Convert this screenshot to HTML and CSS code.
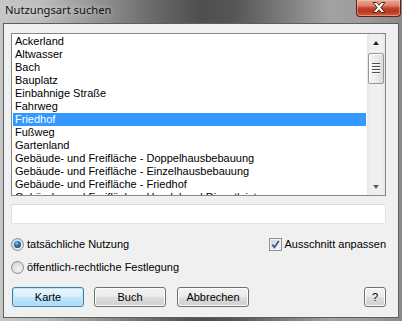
FILE: index.html
```html
<!DOCTYPE html>
<html>
<head>
<meta charset="utf-8">
<link rel="stylesheet" href="styles.css">
</head>
<body>
<div class="window">
  <div class="titlebar">
    <span class="title">Nutzungsart suchen</span>
    <div class="close">
      <svg width="14" height="11" viewBox="0 0 14 11"><polygon points="1,0.5 4.5,0.5 7,3.3 9.5,0.5 13,0.5 8.8,5.5 13,10.5 9.5,10.5 7,7.7 4.5,10.5 1,10.5 5.2,5.5" fill="#fff" stroke="#4a2a24" stroke-width="1" stroke-linejoin="round"/></svg>
    </div>
  </div>
  <div class="client">
    <div class="listbox">
      <div class="items">
        <div class="item">Ackerland</div>
        <div class="item">Altwasser</div>
        <div class="item">Bach</div>
        <div class="item">Bauplatz</div>
        <div class="item">Einbahnige Straße</div>
        <div class="item">Fahrweg</div>
        <div class="item selected">Friedhof</div>
        <div class="item">Fußweg</div>
        <div class="item">Gartenland</div>
        <div class="item">Gebäude- und Freifläche - Doppelhausbebauung</div>
        <div class="item">Gebäude- und Freifläche - Einzelhausbebauung</div>
        <div class="item">Gebäude- und Freifläche - Friedhof</div>
        <div class="item">Gebäude- und Freifläche - Handel und Dienstleistung</div>
      </div>
      <div class="scrollbar">
        <div class="arrow up"></div>
        <div class="thumb"><span></span><span></span><span></span><span></span></div>
        <div class="track"></div>
        <div class="arrow down"></div>
      </div>
    </div>
    <div class="textbox"></div>
    <div class="opt-row first">
      <label class="opt"><span class="radio checked"></span>tatsächliche Nutzung</label>
      <label class="opt"><span class="check"><svg width="11" height="11" viewBox="0 0 11 11"><path d="M2.2 5.6 L4.4 8.3 L8.8 2" fill="none" stroke="#3a54a4" stroke-width="1.8"/></svg></span>Ausschnitt anpassen</label>
    </div>
    <div class="opt-row second">
      <label class="opt"><span class="radio"></span>öffentlich-rechtliche Festlegung</label>
    </div>
    <div class="buttons">
      <div class="btn default">Karte</div>
      <div class="btn">Buch</div>
      <div class="btn wide">Abbrechen</div>
      <div class="btn help">?</div>
    </div>
  </div>
</div>
</body>
</html>
```

FILE: styles.css
```css
html, body {
  margin: 0;
  padding: 0;
}
body {
  width: 402px;
  height: 321px;
  overflow: hidden;
  font-family: "Liberation Sans", Arial, sans-serif;
  font-size: 11px;
  color: #000;
}
.window {
  width: 402px;
  height: 321px;
  box-sizing: border-box;
  padding: 0 3px 3px 3px;
  display: flex;
  flex-direction: column;
  background: linear-gradient(to right, #c6c6c6 0%, #bcbcbc 10%, #9a9a9a 22%, #6a6a6a 38%, #4e4e4e 50%, #555 58%, #7a7a7a 70%, #a2a2a2 82%, #9c9c9c 90%, #8a8a8a 100%);
}
.titlebar {
  height: 23px;
  display: flex;
  align-items: flex-start;
  flex-shrink: 0;
}
.title {
  font-family: "Noto Sans", "Open Sans", sans-serif;
  font-size: 11.2px;
  line-height: 16px;
  margin-top: 2px;
  margin-left: 2px;
  color: #111;
  text-shadow: 0 0 6px rgba(255,255,255,0.7);
}
.close {
  margin-left: auto;
  margin-right: -2px;
  width: 45px;
  height: 17px;
  box-sizing: border-box;
  border: 1px solid #5c2218;
  border-top: none;
  border-radius: 0 0 4px 4px;
  background: linear-gradient(to bottom, #e9a792 0%, #d9826c 35%, #c3442c 50%, #b8341d 70%, #d0603d 100%);
  box-shadow: inset 0 0 0 1px rgba(255,210,190,0.45);
  display: flex;
  align-items: center;
  justify-content: center;
}
.close svg {
  display: block;
  margin-top: -1px;
}
.client {
  flex: 1;
  border: 1px solid #5e5e5e;
  background: #f0f0f0;
  padding: 9px 0 0 7px;
}
.listbox {
  width: 375px;
  height: 163px;
  box-sizing: border-box;
  border: 1px solid #828790;
  background: #fff;
  display: flex;
}
.items {
  flex: 1;
  padding: 1px 1px 0 1px;
  overflow: hidden;
}
.item {
  height: 13px;
  line-height: 13px;
  padding-left: 2px;
  white-space: nowrap;
}
.item.selected {
  background: #3399ff;
  color: #fff;
}
.scrollbar {
  width: 18px;
  display: flex;
  flex-direction: column;
  background: linear-gradient(to right, #e6e6e6, #f0f0f0 20%, #f0f0f0 80%, #e8e8e8);
}
.arrow {
  height: 17px;
  display: flex;
  align-items: center;
  justify-content: center;
}
.arrow::before {
  content: "";
  width: 0;
  height: 0;
  border-left: 3.5px solid transparent;
  border-right: 3.5px solid transparent;
}
.arrow.up::before {
  border-bottom: 4px solid #222;
  margin-top: 1px;
}
.arrow.down::before {
  border-top: 4px solid #606060;
  margin-top: 1px;
}
.thumb {
  margin: 2px 1px 0 1px;
  height: 31px;
  box-sizing: border-box;
  border: 1px solid #969696;
  border-radius: 2px;
  background: linear-gradient(to right, #f6f6f6 0%, #ececec 50%, #dadada 100%);
  box-shadow: inset 1px 1px 0 #fff;
  display: flex;
  flex-direction: column;
  align-items: center;
  justify-content: center;
  gap: 1px;
}
.thumb span {
  width: 8px;
  height: 1px;
  background: #4d4d4d;
  border-bottom: 1px solid #f8f8f8;
}
.track {
  flex: 1;
}
.textbox {
  margin-top: 8px;
  width: 375px;
  height: 20px;
  box-sizing: border-box;
  border: 1px solid #dfe3e8;
  border-top-color: #d4d7db;
  border-radius: 2px;
  background: #fff;
}
.opt-row {
  display: flex;
  justify-content: space-between;
  width: 375px;
  height: 13px;
  line-height: 13px;
}
.opt-row.first {
  margin-top: 14px;
}
.opt-row.second {
  margin-top: 10px;
}
.opt {
  display: flex;
  align-items: center;
  white-space: nowrap;
}
.radio {
  width: 13px;
  height: 13px;
  box-sizing: border-box;
  border-radius: 50%;
  border: 1px solid #8a8a8a;
  background: radial-gradient(circle at 60% 65%, #f4f4f4 0%, #dcdcdc 60%, #cfcfcf 100%);
  margin-right: 3px;
  display: flex;
  align-items: center;
  justify-content: center;
}
.radio.checked::after {
  content: "";
  width: 7px;
  height: 7px;
  border-radius: 50%;
  background: radial-gradient(circle at 40% 35%, #8cc8f0 0%, #2a7cbc 35%, #0f4a84 75%, #133a60 100%);
}
.check {
  width: 13px;
  height: 13px;
  box-sizing: border-box;
  border: 1px solid #8e8f8f;
  background: linear-gradient(135deg, #d0d0d0 0%, #efefef 70%, #fafafa 100%);
  box-shadow: inset 0 0 0 1px #f4f4f4;
  margin-right: 2px;
  display: flex;
  align-items: center;
  justify-content: center;
}
.check svg {
  display: block;
}
.buttons {
  margin-top: 13px;
  margin-left: 1px;
  width: 374px;
  display: flex;
  gap: 10px;
}
.btn {
  width: 72px;
  height: 20px;
  box-sizing: border-box;
  border: 1px solid #707070;
  border-radius: 3px;
  background: linear-gradient(to bottom, #f2f2f2 0%, #ebebeb 48%, #dddddd 52%, #cfcfcf 100%);
  box-shadow: inset 0 0 0 1px #fcfcfc;
  text-align: center;
  line-height: 18px;
}
.btn.default {
  border-color: #3c7fb1;
  background: linear-gradient(to bottom, #eaf6fd 0%, #d9f0fc 48%, #bee6fd 52%, #a7d9f5 100%);
  box-shadow: inset 0 0 0 1px #bfe3f7;
}
.btn.wide {
  margin-left: 1px;
}
.btn.help {
  width: 22px;
  margin-left: auto;
}
```
